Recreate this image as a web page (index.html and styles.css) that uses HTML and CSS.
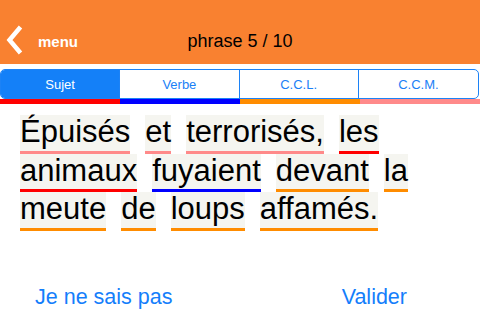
FILE: index.html
```html
<!DOCTYPE html>
<html lang="fr">
<head>
<meta charset="utf-8">
<title>phrase 5 / 10</title>
<link rel="stylesheet" href="styles.css">
</head>
<body>
<div class="screen">
  <header class="topbar">
    <a class="back">
      <svg class="chev" width="17" height="30" viewBox="0 0 17 30" aria-hidden="true">
        <polyline points="14.5,2 3.5,15 14.5,28" fill="none" stroke="#fff" stroke-width="4.5" stroke-linejoin="miter" stroke-linecap="butt"/>
      </svg>
      <span class="back-label">menu</span>
    </a>
    <div class="title">phrase 5 / 10</div>
    <div class="spacer"></div>
  </header>

  <nav class="segments">
    <div class="seg seg-active">Sujet</div>
    <div class="seg">Verbe</div>
    <div class="seg">C.C.L.</div>
    <div class="seg">C.C.M.</div>
  </nav>
  <div class="bars">
    <div class="bar bar-red"></div>
    <div class="bar bar-blue"></div>
    <div class="bar bar-orange"></div>
    <div class="bar bar-pink"></div>
  </div>

  <main class="sentence">
    <span class="word u-pink">Épuisés</span>
    <span class="word u-pink">et</span>
    <span class="word u-pink">terrorisés,</span>
    <span class="word u-red">les</span>
    <span class="word u-red">animaux</span>
    <span class="word u-blue">fuyaient</span>
    <span class="word u-orange">devant</span>
    <span class="word u-orange">la</span>
    <span class="word u-orange">meute</span>
    <span class="word u-orange">de</span>
    <span class="word u-orange">loups</span>
    <span class="word u-orange">affamés.</span>
  </main>

  <footer class="actions">
    <a class="action">Je ne sais pas</a>
    <a class="action">Valider</a>
  </footer>
</div>
</body>
</html>
```

FILE: styles.css
```css
* { box-sizing: border-box; }
html, body { margin: 0; padding: 0; background: #fff; }
body { font-family: "Liberation Sans", Arial, Helvetica, sans-serif; }

.screen {
  width: 480px;
  height: 320px;
  display: flex;
  flex-direction: column;
  overflow: hidden;
}

.topbar {
  height: 64px;
  background: #f98130;
  display: grid;
  grid-template-columns: 1fr auto 1fr;
  align-items: center;
  padding-top: 19px;
}
.back {
  display: flex;
  align-items: center;
  padding-left: 6px;
  color: #fff;
}
.chev { display: block; margin-top: -4px; }
.back-label {
  margin-left: 15px;
  font-weight: bold;
  font-size: 15px;
}
.title {
  font-size: 18px;
  color: #000;
}

.segments {
  margin-top: 5px;
  height: 30px;
  display: grid;
  grid-template-columns: repeat(4, 1fr);
  border: 1px solid #1c82f6;
  border-radius: 5px;
  overflow: hidden;
  width: 479px;
}
.seg {
  display: flex;
  align-items: center;
  justify-content: center;
  font-size: 13px;
  color: #1a80f6;
  border-right: 1px solid #1c82f6;
}
.seg:last-child { border-right: none; }
.seg-active {
  background: #1480f8;
  color: #fff;
}

.bars {
  display: grid;
  grid-template-columns: repeat(4, 1fr);
  height: 5px;
}
.bar-red { background: #ff0000; }
.bar-blue { background: #0000ff; }
.bar-orange { background: #ff8c00; }
.bar-pink { background: #ff8a8a; }

.sentence {
  display: flex;
  flex-wrap: wrap;
  column-gap: 15px;
  padding: 11px 20px 0 20px;
  width: 480px;
}
.word {
  font-size: 31px;
  line-height: 33.5px;
  height: 38.5px;
  padding-bottom: 2px;
  color: #000;
  background: #f5f5f0;
  border-bottom: 3px solid transparent;
  white-space: nowrap;
}
.u-pink { border-bottom-color: #ff8a8a; }
.u-red { border-bottom-color: #ff0000; }
.u-blue { border-bottom-color: #0000ff; }
.u-orange { border-bottom-color: #ff8c00; }

.actions {
  margin-top: auto;
  height: 46px;
  display: flex;
  justify-content: space-between;
  align-items: center;
  padding: 0 73px 0 35px;
}
.action {
  font-size: 21.5px;
  line-height: 46px;
  color: #147efb;
}
```
